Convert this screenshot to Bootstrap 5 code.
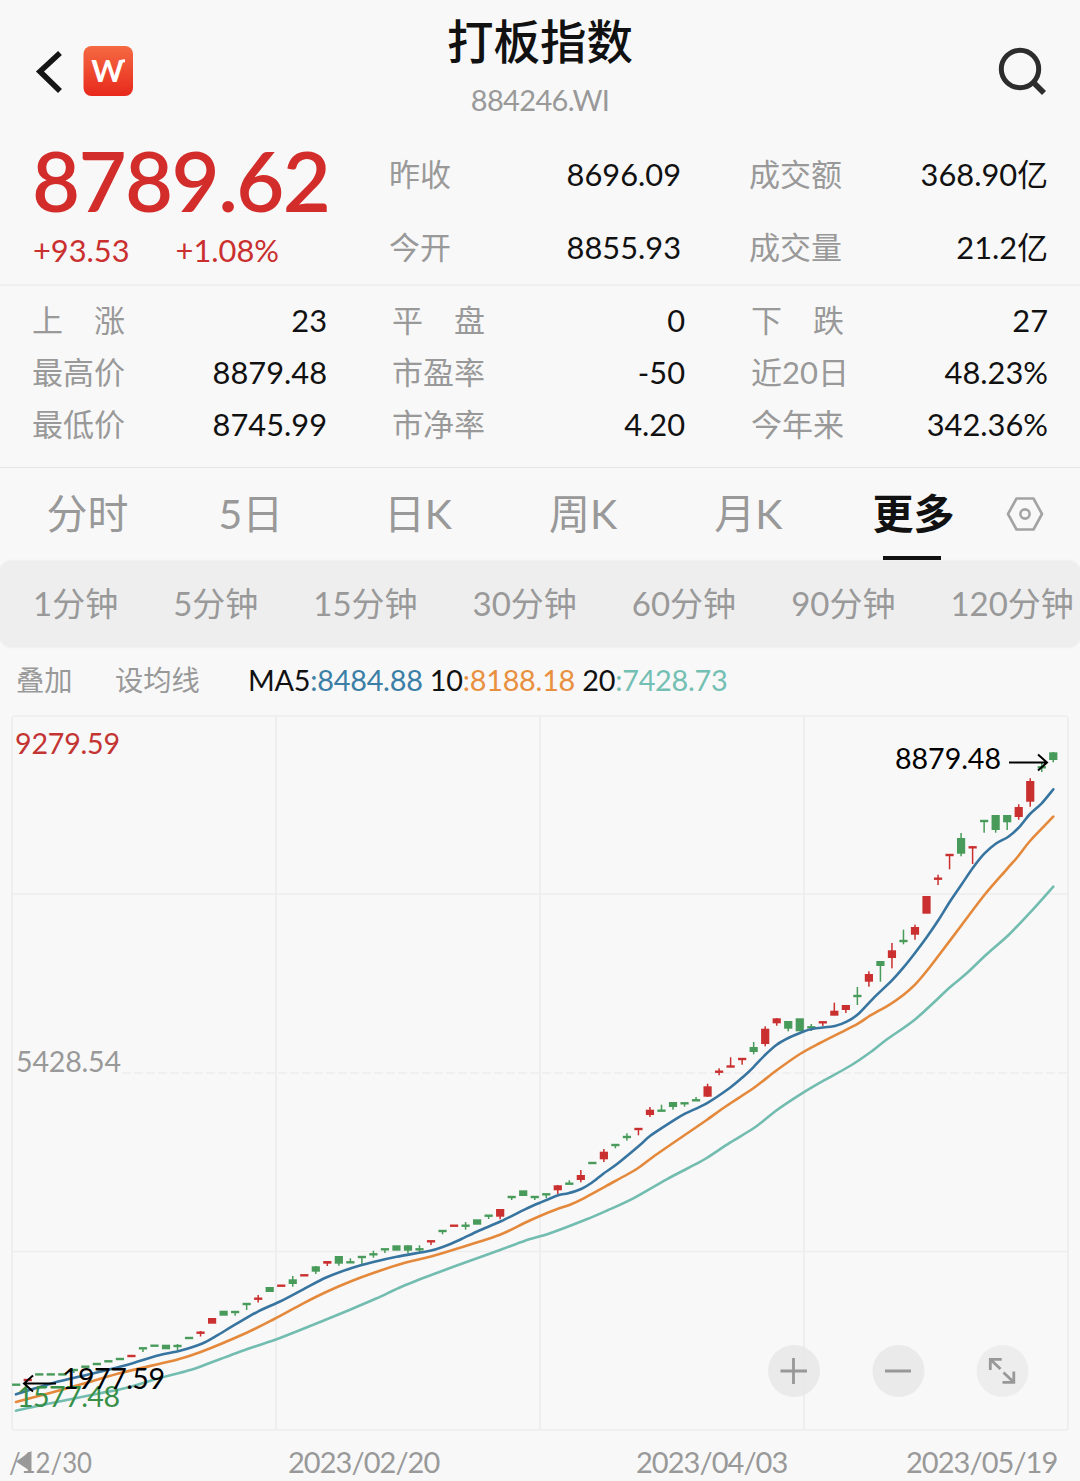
<!DOCTYPE html>
<html lang="zh-CN">
<head>
<meta charset="utf-8">
<meta name="viewport" content="width=device-width, initial-scale=1">
<title>打板指数 884246.WI</title>
<link href="https://cdn.jsdelivr.net/npm/bootstrap@5.3.0/dist/css/bootstrap.min.css" rel="stylesheet">
<style>
  body { width: 1080px; height: 1481px; overflow: hidden; background: #f8f8f8; color: #111; font-family: Lato, "Noto Sans CJK SC", sans-serif; font-size: 31px; line-height: 52px; white-space: nowrap; }
  .muted { color: #999; }
  .rise { color: #c9302f; }
  .topbar { height: 130px; padding: 0 32px; }
  .side { width: 120px; padding-top: 41px; }
  .title { font-size: 46.5px; font-weight: 500; line-height: 60px; padding-top: 11px; }
  .code { font-size: 29px; line-height: 36px; margin-top: 11px; letter-spacing: -.65px; }
  .quote { height: 156px; border-bottom: 2px solid #efefef; padding: 0 32px; }
  .price-col { width: 357px; }
  .price { font-size: 83px; line-height: 84px; padding-top: 8px; letter-spacing: -1.6px; font-weight: 600; color: #d32d2b; }
  .change { line-height: 40px; margin-top: 9px; padding-left: 1px; gap: 46px; font-size: 30.8px; }
  .pair-a { width: 292px; }
  .pair-b { width: 299px; margin-left: 68px; }
  .quote .line { height: 73px; line-height: 73px; }
  .quote .lines { padding-top: 8px; }
  .stats { height: 182px; border-bottom: 1px solid #e6e6e6; padding: 8px 32px 0; }
  .stats .s1 { width: 295px; }
  .stats .s2 { width: 293px; margin-left: 65px; }
  .stats .s3 { width: 297px; margin-left: 66px; }
  .num { font-size: 30.8px; }
  .stats .num { padding-top: 1px; margin-bottom: -1px; }
  .periods { height: 93px; padding-left: 5px; font-size: 41px; line-height: 92px; }
  .periods .tab { width: 165.2px; text-align: center; }
  .periods .active { color: #111; font-weight: 700; }
  .periods .active::after { content: ""; display: block; width: 58px; height: 4px; margin: -4px auto 0 52px; background: #111; }
  .minutes { height: 86px; background: #eee; border-radius: 12px; padding-left: 33px; gap: 55px; font-size: 33px; line-height: 84px; box-shadow: 0 0 3px #e6e6e6; }
  .legend { height: 68px; padding-left: 16px; font-size: 28.3px; line-height: 66px; }
  .legend .overlay { width: 99px; }
  .legend .avg { width: 133px; }
  .ma { font-size: 28.8px; letter-spacing: -.23px; }
  .c5 { color: #3b7ea6; } .c10 { color: #e8903f; } .c20 { color: #74bfb3; }
  .plot { display: block; height: 717px; width: 1080px; }
  .dates { height: 49px; padding-left: 8px; font-size: 29px; letter-spacing: -.95px; line-height: 60px; color: #999; }
  .dates span { width: 152px; flex: none; }
</style>
</head>
<body>
<header class="topbar d-flex justify-content-between">
  <div class="side d-flex align-items-start">
    <svg width="102" height="60" viewBox="0 0 102 60">
      <defs><linearGradient id="lg" x2="0" y2="1"><stop stop-color="#f56a42"/><stop offset="1" stop-color="#e7291c"/></linearGradient></defs>
      <path d="M28 12 8 30.5 28 50" fill="none" stroke="#151515" stroke-width="5.600"/>
      <rect x="51.500" y="5" width="49.500" height="50" rx="8" fill="url(#lg)"/>
      <text x="75.500" y="41" font-size="31" font-weight="700" fill="#fff" text-anchor="middle">W</text>
      <path d="M88 21.500q1-1.700 5-1.700" fill="none" stroke="#fff" stroke-width="3"/>
    </svg>
  </div>
  <div class="text-center">
    <div class="title">打板指数</div>
    <div class="code muted">884246.WI</div>
  </div>
  <div class="side d-flex justify-content-end align-items-start">
    <svg width="52" height="60" viewBox="0 0 52 60" fill="none" stroke="#2d2d2d" stroke-width="5">
      <circle cx="24" cy="28" r="18.700"/><path d="m37 41 11 11" stroke-width="5.600"/>
    </svg>
  </div>
</header>

<section class="quote d-flex">
  <div class="price-col">
    <div class="price">8789.62</div>
    <div class="change rise d-flex"><span>+93.53</span><span>+1.08%</span></div>
  </div>
  <div class="lines pair-a">
    <div class="line d-flex justify-content-between"><span class="muted">昨收</span><span class="num">8696.09</span></div>
    <div class="line d-flex justify-content-between"><span class="muted">今开</span><span class="num">8855.93</span></div>
  </div>
  <div class="lines pair-b">
    <div class="line d-flex justify-content-between"><span class="muted">成交额</span><span class="num">368.90亿</span></div>
    <div class="line d-flex justify-content-between"><span class="muted">成交量</span><span class="num">21.2亿</span></div>
  </div>
</section>

<section class="stats d-flex">
  <div class="s1">
    <div class="d-flex justify-content-between"><span class="muted">上　涨</span><span class="num">23</span></div>
    <div class="d-flex justify-content-between"><span class="muted">最高价</span><span class="num">8879.48</span></div>
    <div class="d-flex justify-content-between"><span class="muted">最低价</span><span class="num">8745.99</span></div>
  </div>
  <div class="s2">
    <div class="d-flex justify-content-between"><span class="muted">平　盘</span><span class="num">0</span></div>
    <div class="d-flex justify-content-between"><span class="muted">市盈率</span><span class="num">-50</span></div>
    <div class="d-flex justify-content-between"><span class="muted">市净率</span><span class="num">4.20</span></div>
  </div>
  <div class="s3">
    <div class="d-flex justify-content-between"><span class="muted">下　跌</span><span class="num">27</span></div>
    <div class="d-flex justify-content-between"><span class="muted">近20日</span><span class="num">48.23%</span></div>
    <div class="d-flex justify-content-between"><span class="muted">今年来</span><span class="num">342.36%</span></div>
  </div>
</section>

<nav class="periods muted d-flex">
  <div class="tab">分时</div><div class="tab pe-1">5日</div><div class="tab">日K</div><div class="tab">周K</div><div class="tab">月K</div><div class="tab active">更多</div>
  <div class="flex-fill d-flex align-items-center">
    <svg class="ms-1 mb-1" width="48" height="40" viewBox="-1 0 48 40" fill="none" stroke="#a3a3a3" stroke-width="2.600" stroke-linejoin="round">
      <path d="M15.500 5.500h17L41 21l-8.500 15.500h-17L7 21z"/><circle cx="24" cy="21" r="4.600"/>
    </svg>
  </div>
</nav>

<div class="minutes muted d-flex">
  <span>1分钟</span><span>5分钟</span><span>15分钟</span><span>30分钟</span><span>60分钟</span><span>90分钟</span><span>120分钟</span>
</div>

<div class="legend d-flex">
  <span class="overlay muted">叠加</span><span class="avg muted">设均线</span>
  <span class="ma">MA5<span class="c5">:8484.88</span> 10<span class="c10">:8188.18</span> 20<span class="c20">:7428.73</span></span>
</div>

<svg class="plot" viewBox="0 715 1080 717">
  <g fill="none" stroke="#ededed" stroke-width="1.700">
    <rect x="12" y="716" width="1056" height="714" rx="3"/>
    <path d="M276 716V1430M540 716V1430M804 716V1430M12 894H1068M12 1251.500H1068"/>
    <path d="M122 1073H1068" stroke-dasharray="9 3" stroke-width="1.300"/>
  </g>
  <g id="candles"></g>
  <g id="averages" fill="none" stroke-width="2.600" stroke-linejoin="round" stroke-linecap="round">
    <path stroke="#72bcb0" data-points="16,1410.7 43.3,1404.7 100,1393.3 126.7,1387.7 160,1378 186.7,1371 200,1366.7 246.7,1349.3 280,1338 325,1320 350,1309.7 376.7,1298.3 403.3,1286 436.7,1273 470,1260.7 500,1250 525,1240.7 550,1233.3 586.7,1219.3 606.7,1210.7 633.3,1198.3 666.7,1179.3 696.7,1163.7 706.7,1158 730,1142.7 755,1127.3 776.7,1110.3 800,1094.7 820,1082.7 850,1066 870,1052.5 886.7,1039.5 915,1019.5 950,987.3 966.7,973.3 986.7,954.3 1008.3,935.3 1030,912.7 1053.3,886.7"/>
    <path stroke="#e4893b" data-points="16,1402 50,1393 86.7,1382.7 123.3,1372.3 176.7,1359.7 200,1352.3 246.7,1332.7 273.3,1319.5 303.3,1303.3 326.7,1291.7 351.7,1281 373.3,1273 403.3,1263.3 430,1256.7 460,1247.7 500,1234.7 525,1222.7 540,1216 556.7,1209.3 570,1204.7 581.7,1199.3 606.7,1185.7 636.7,1169 653.3,1156.7 683.3,1136 706.7,1120 726.7,1105.7 753.3,1088.3 776.7,1070.3 800,1054 820,1043 856.7,1024.3 870,1015.7 890,1004.3 903.3,995 915,984.7 926.7,971 938.3,956 961.7,925 985,894.3 1006.7,869.3 1018.3,856 1030,841 1053.3,816.7"/>
    <path stroke="#37749f" data-points="16,1394.3 53,1383 93,1373.5 126.7,1365 156.7,1355.7 180,1350.7 201.7,1343.7 216.7,1335.7 233.3,1325.7 258.3,1311.3 280,1301.5 303.3,1289.3 326.7,1277.3 351.7,1268 373.3,1262 396.7,1256.7 430,1250.7 443.3,1246.7 460,1239.7 478.3,1231 501,1221.3 525,1209.3 540,1202.7 558.3,1195.3 568.3,1193.3 581.7,1188.7 591.7,1182.7 603.3,1173.7 616.7,1164.3 640,1145 650,1136 673.3,1120.7 685,1113.7 706.7,1103.3 730,1087.7 743.3,1076.7 753.3,1067.3 765,1055 776.7,1044.7 788.3,1038 800,1033 811.7,1029 835,1026 846.7,1021.7 858.3,1014 873.3,998.3 891.7,980.7 903.3,967.7 915,953 926.7,937.3 938.3,920.3 950,901.5 961.7,884.3 973.3,867.3 984.3,853.7 995.7,843.7 1008.3,836.7 1019,827.3 1030,814 1041.7,803.3 1053.3,789.3"/>
  </g>
  <g font-size="28.600">
    <text x="15" y="754" fill="#c33433" textLength="105">9279.59</text>
    <text x="16" y="1072" fill="#999" textLength="105">5428.54</text>
    <text x="17" y="1407" fill="#378f48" textLength="103">1577.48</text>
    <text x="62" y="1389" fill="#000" textLength="103">1977.59</text>
    <text x="895" y="769" fill="#000" textLength="106">8879.48</text>
  </g>
  <g fill="none" stroke="#000" stroke-width="2">
    <path d="M56 1383.500H25M33 1375.500l-9 8 9 8"/>
    <path d="M1009 762.500H1046M1038 754.500l9 8-9 8"/>
  </g>
  <g fill="#e6e6e6" fill-opacity=".8"><circle cx="794" cy="1371" r="26"/><circle cx="898.500" cy="1371" r="26"/><circle cx="1002.500" cy="1371" r="26" fill-opacity=".6"/></g>
  <g fill="none" stroke="#989898" stroke-width="2.800">
    <path d="M780.500 1371H807M793.500 1358V1384M885 1371H911"/>
    <path d="M1000.500 1369 991 1360M990.300 1370v-10.700h11.400M1003.500 1372.500l9.500 9M1013.800 1371.500v10.800h-11.300"/>
  </g>
</svg>

<div class="dates d-flex">
  <svg class="flex-shrink-0" width="88" height="49" viewBox="8 1432 88 49">
    <text x="9" y="1472.500" font-size="28.600" letter-spacing="0" textLength="83" lengthAdjust="spacingAndGlyphs" fill="#999">/12/30</text>
    <path d="M16 1461.500 31.500 1451v21z" fill="#999"/>
  </svg>
  <span style="margin-left:192px">2023/02/20</span><span style="margin-left:196px">2023/04/03</span><span style="margin-left:118px">2023/05/19</span>
</div>

<script>
  // Each candle: colour, body top, body bottom, high, low. A single level marks a flat body.
  const candles = `g 1384.7;r 1380;g 1374.4;g 1374.4;g 1374.4;g 1370 1370 1370 1373;g 1366.7;g 1364;g 1361.3;g 1359;r 1356;g 1348.3 1348.3 1348 1352;g 1345.7;g 1344.7 1349.3;g 1346 1346 1344 1350;g 1338;r 1332.7 1332.7 1331 1336.5;r 1318 1323.7;g 1310.7 1315.7;g 1312 1312 1312 1315.7;g 1304 1304 1304 1310;r 1298.7 1298.7 1295 1302.5;g 1287 1292;r 1285.7;g 1279.3 1284 1276 1286.7;r 1275.3;g 1266.3 1271.7 1266 1274;r 1261 1263.7 1261 1266;g 1256 1263.7 1256 1265.7;g 1262.3 1262.3 1258.3 1263;g 1257 1257 1257 1264;g 1254.3 1254.3 1250.7 1257.7;g 1249.3 1249.3 1249 1253;g 1245.3 1250.7;g 1245.3 1250.7 1245.3 1253.3;g 1249.3 1249.3 1245.3 1252;r 1241.3 1241.3 1241 1245;g 1231 1231 1231 1234.3;r 1225.7;g 1225.7 1225.7 1222 1229.7;g 1219.3 1224.7;g 1215.7 1215.7 1215 1219;r 1209 1216.7 1209 1219.3;g 1197 1197 1197 1200;g 1190.3 1196;g 1197 1197 1197 1200;g 1194.3 1194.3 1194 1198;r 1185.3 1190.3 1185 1194;g 1183.7 1183.7 1180.3 1184;r 1175 1180 1170 1182.3;g 1163;r 1151.7 1159.3 1149 1162;g 1145 1145 1145 1148.3;g 1137 1137 1133.3 1140.7;r 1129 1129 1128 1135.3;r 1109.7 1115 1107 1117;g 1110.7 1110.7 1104.7 1111;g 1102 1107 1102 1109.7;g 1103.3 1103.3 1103 1106.7;g 1100.3 1100.3 1097 1101;r 1086.3 1096.7 1083.7 1097;r 1071.7 1071.7 1068.3 1075.3;r 1066.5 1066.5 1057.3 1067;r 1059 1059 1059 1064.7;g 1047 1052 1042 1054.3;r 1028.7 1044 1026.3 1046.3;r 1018.3 1023.3 1018 1025.7;g 1021 1028.7 1021 1031.3;g 1018.3 1031.3;g 1027.3 1027.3 1024 1031;r 1022.3 1022.3 1022 1026;r 1010.7 1015.7 1002.7 1015;r 1005 1010 1005 1013;g 996 996 987 1005;r 974 981.7 971.3 986.7;g 961 966 961 981.7;r 950.3 958 943 968.3;g 941 941 929.7 944.3;r 927 934.7 924.7 939.7;r 896 913.7;r 878.7 878.7 874.7 885;r 855 855 854 869.3;g 838 853.7 833 856.3;r 847.3 847.3 846 864;g 821 821 820 832.7;g 815 830 815 832.7;g 815 822.3 815 830;r 807 817 804.3 819.7;r 781 801.7 778.3 806.7;g 767.3 767.3 763 772;g 752.3 760 752 762.3`;
  document.getElementById('candles').innerHTML = candles.split(';').map((row, i) => {
    const [k, ...v] = row.split(' ');
    let [top, bottom, high, low] = v.map(Number);
    if (bottom === undefined || bottom === top) { bottom = top + 1.2; top -= 1.2; }
    const x = 16.2 + 11.523 * i, fill = k === 'r' ? '#c9302f' : '#489b5a';
    const wick = high === undefined ? '' : `<rect x="${x - .75}" y="${high}" width="1.500" height="${low - high}" fill="${fill}"/>`;
    return `<rect x="${x - 4.1}" y="${top}" width="8.200" height="${bottom - top}" fill="${fill}"/>${wick}`;
  }).join('');

  // Moving averages: smooth curve through the points (Catmull-Rom as cubic segments).
  document.querySelectorAll('#averages path').forEach(path => {
    const p = path.dataset.points.split(' ').map(s => s.split(',').map(Number));
    let d = `M${p[0]}`;
    for (let i = 0; i < p.length - 1; i++) {
      const a = p[i - 1] || p[i], b = p[i], c = p[i + 1], e = p[i + 2] || c;
      d += `C${b[0] + (c[0] - a[0]) / 7} ${b[1] + (c[1] - a[1]) / 7} ${c[0] - (e[0] - b[0]) / 7} ${c[1] - (e[1] - b[1]) / 7} ${c[0]} ${c[1]}`;
    }
    path.setAttribute('d', d);
  });
</script>
<script src="https://cdn.jsdelivr.net/npm/bootstrap@5.3.0/dist/js/bootstrap.bundle.min.js"></script>
</body>
</html>
